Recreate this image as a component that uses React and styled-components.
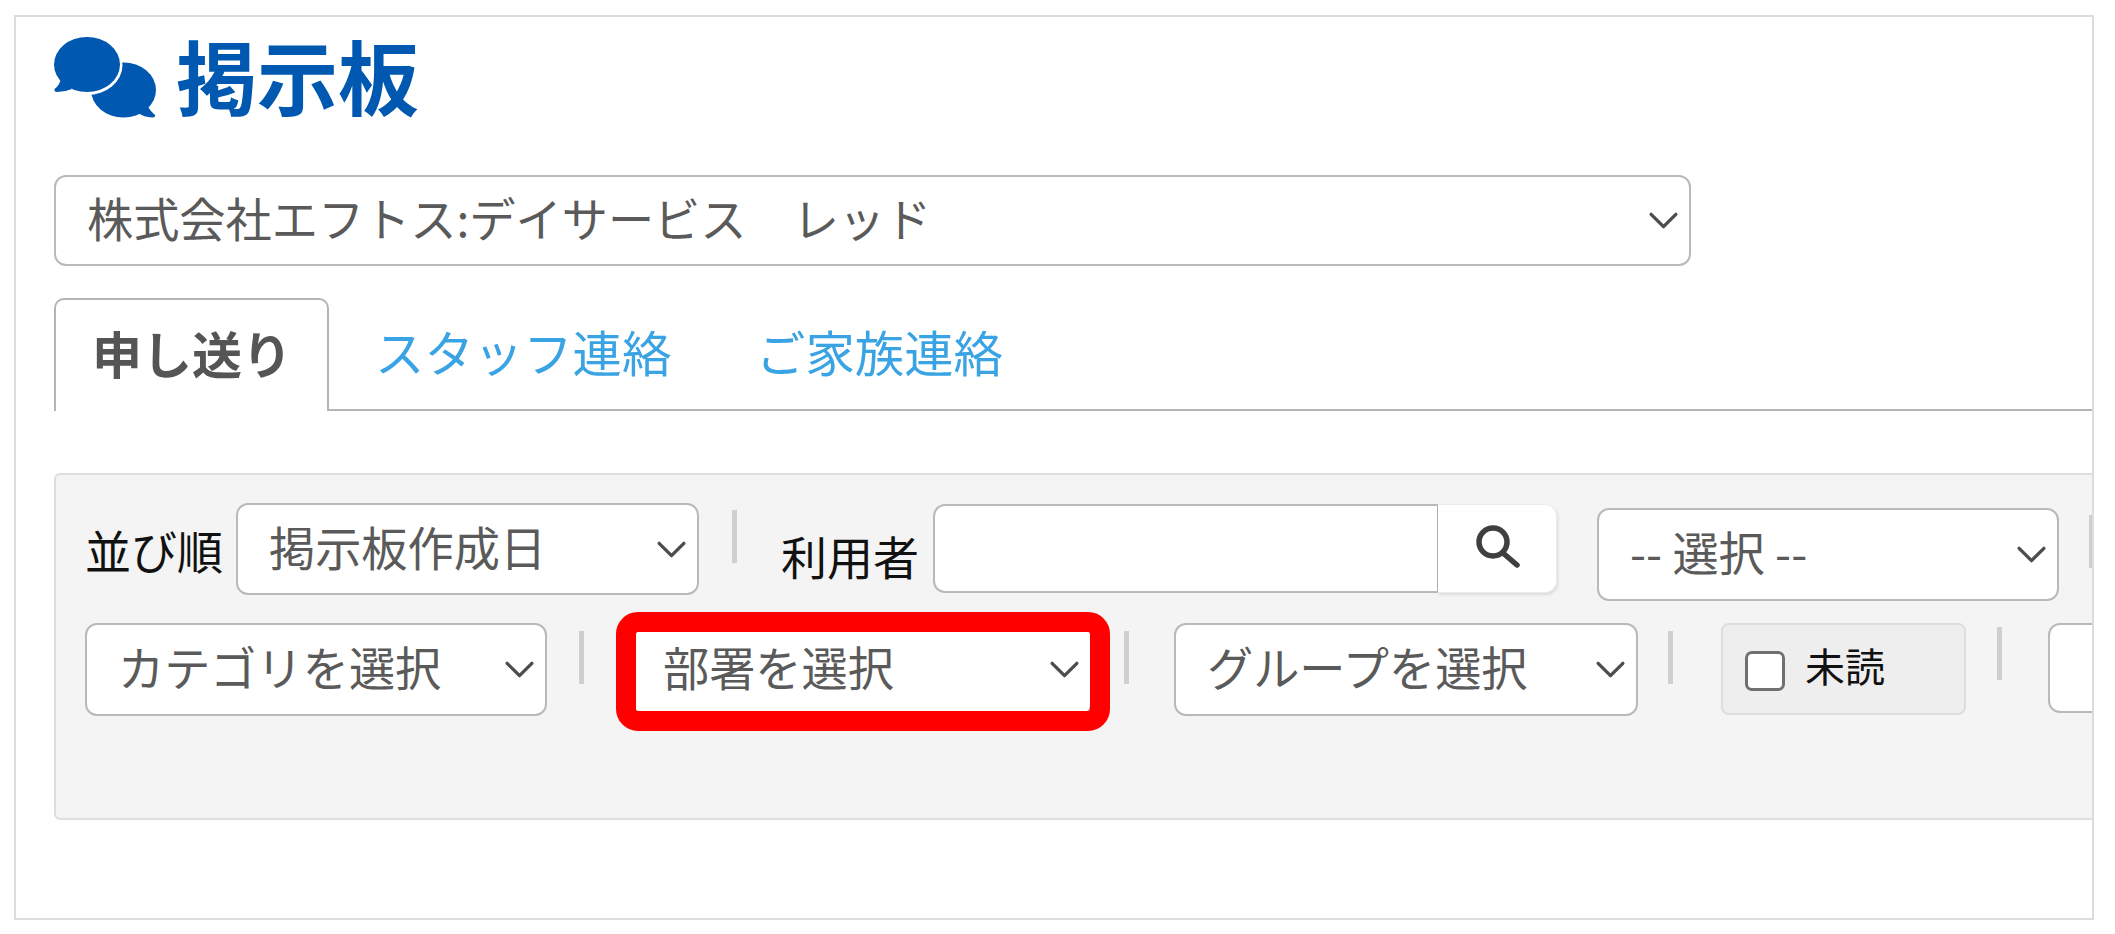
import React from 'react';
import styled, { createGlobalStyle } from 'styled-components';

const GlobalStyle = createGlobalStyle`
  html, body {
    margin: 0;
    padding: 0;
    background: #ffffff;
    font-family: "Noto Sans CJK JP", "Noto Sans", sans-serif;
  }
`;

const Frame = styled.div`
  box-sizing: border-box;
  width: 2080px;
  height: 905px;
  margin: 15px 0 0 14px;
  padding: 20px 0 0 38px;
  border: 2px solid #dcdcdc;
  overflow: hidden;
`;

const TitleRow = styled.div`
  display: flex;
  align-items: center;
  gap: 19px;
  height: 82px;
`;

const Title = styled.h1`
  margin: -8px 0 0;
  font-size: 81px;
  line-height: 82px;
  font-weight: 700;
  color: #0058b0;
`;

const SelectBox = styled.div`
  box-sizing: border-box;
  flex: none;
  display: flex;
  align-items: center;
  justify-content: space-between;
  position: relative;
  width: ${(p) => p.$width}px;
  height: ${(p) => p.$height}px;
  margin-top: ${(p) => p.$top || 0}px;
  margin-left: ${(p) => p.$left || 0}px;
  padding: 0 9px 7px ${(p) => p.$pad || 31}px;
  background: #ffffff;
  border: 2px solid #b9b9b9;
  border-radius: 12px;
  font-size: 46.2px;
  line-height: 60px;
  color: #5a5a5a;
  white-space: nowrap;
`;

const Chevron = styled.svg`
  flex: none;
  width: 33px;
  height: 33px;
  margin-top: 7px;
  fill: none;
  stroke: #4d4d4d;
  stroke-width: 1.6;
  stroke-linecap: round;
  stroke-linejoin: round;
`;

const Tabs = styled.div`
  display: flex;
  align-items: stretch;
  height: 113px;
  margin-top: 32px;
  border-bottom: 2px solid #b4b4b4;
  box-sizing: border-box;
`;

const Tab = styled.div`
  box-sizing: border-box;
  display: flex;
  align-items: center;
  height: ${(p) => (p.$active ? '113px' : '111px')};
  width: ${(p) => p.$width}px;
  padding-left: ${(p) => p.$pad}px;
  padding-bottom: 7px;
  font-size: ${(p) => (p.$active ? 50 : 49.4)}px;
  font-weight: ${(p) => (p.$active ? 700 : 400)};
  color: ${(p) => (p.$active ? '#555555' : '#3aa3e3')};
  background: #ffffff;
  border: ${(p) => (p.$active ? '2px solid #b4b4b4' : 'none')};
  border-bottom: none;
  border-radius: 10px 10px 0 0;
`;

const Panel = styled.div`
  box-sizing: border-box;
  width: 2200px;
  height: 347px;
  margin-top: 62px;
  padding: 28px 0 0 29px;
  background: #f4f4f4;
  border: 2px solid #dedede;
  border-radius: 6px;
`;

const FilterRow = styled.div`
  display: flex;
  align-items: flex-start;
  height: ${(p) => p.$height}px;
`;

const Label = styled.span`
  flex: none;
  margin-top: ${(p) => p.$top}px;
  margin-left: ${(p) => p.$left}px;
  font-size: 46px;
  line-height: 46px;
  color: #111111;
  white-space: nowrap;
`;

const Divider = styled.div`
  flex: none;
  width: 5px;
  height: 53px;
  margin-top: ${(p) => p.$top}px;
  margin-left: ${(p) => p.$left}px;
  background: #cfcfcf;
`;

const SearchGroup = styled.div`
  flex: none;
  display: flex;
  width: 624px;
  height: 89px;
  margin-top: 1px;
  margin-left: 14px;
`;

const SearchInput = styled.input`
  box-sizing: border-box;
  width: 505px;
  height: 100%;
  padding: 0 20px;
  background: #ffffff;
  border: 2px solid #b9b9b9;
  border-right: 1px solid #b0b0b0;
  border-radius: 12px 0 0 12px;
  outline: none;
`;

const SearchButton = styled.button`
  box-sizing: border-box;
  display: flex;
  align-items: center;
  justify-content: center;
  width: 119px;
  height: 100%;
  padding: 0;
  background: #ffffff;
  border: 1px solid #ebebeb;
  border-left: none;
  border-radius: 0 12px 12px 0;
  box-shadow: 1px 2px 3px rgba(0, 0, 0, 0.1);
`;

const SearchIcon = styled.svg`
  width: 46px;
  height: 44px;
  margin-bottom: 6px;
  fill: none;
  stroke: #3f3f3f;
  stroke-width: 5.5;
  stroke-linecap: round;
`;

const Highlight = styled.div`
  box-sizing: border-box;
  position: absolute;
  top: -13px;
  right: -20px;
  bottom: -17px;
  left: -16px;
  border: 20px solid #ff0000;
  border-radius: 22px;
`;

const CheckPill = styled.label`
  box-sizing: border-box;
  flex: none;
  display: flex;
  align-items: center;
  width: 245px;
  height: 92px;
  margin-left: 48px;
  padding: 0 0 0 22px;
  background: #eeeeee;
  border: 2px solid #dddddd;
  border-radius: 8px;
`;

const CheckSquare = styled.span`
  box-sizing: border-box;
  display: block;
  width: 40px;
  height: 40px;
  margin-top: 3px;
  background: #ffffff;
  border: 3px solid #707070;
  border-radius: 7px;
`;

const CheckText = styled.span`
  margin-left: 20px;
  margin-bottom: 8px;
  font-size: 40px;
  line-height: 46px;
  color: #111111;
`;

const BlankBox = styled.div`
  box-sizing: border-box;
  flex: none;
  width: 200px;
  height: 90px;
  margin-left: 46px;
  background: #ffffff;
  border: 2px solid #b9b9b9;
  border-radius: 12px;
`;

const ChevronIcon = () => (
  <Chevron viewBox="0 0 16 16">
    <path d="M2 5l6 6 6-6" />
  </Chevron>
);

const Select = ({ children, highlight, ...rest }) => (
  <SelectBox {...rest}>
    <span>{children}</span>
    <ChevronIcon />
    {highlight && <Highlight />}
  </SelectBox>
);

const BubblesIcon = () => (
  <svg width="103" height="82" viewBox="0 0 103 82">
    <ellipse cx="69.5" cy="53" rx="32.5" ry="27.5" fill="#0058b0" />
    <path d="M93 67 Q95 73 101 78 Q102 80 98 80.5 Q90 80 84 76 Z" fill="#0058b0" />
    <ellipse cx="33" cy="28" rx="35.5" ry="30" fill="#ffffff" />
    <ellipse cx="33" cy="27.5" rx="33" ry="27.5" fill="#0058b0" />
    <path d="M7 41 Q6 48 0.5 52 Q0 55 3 55 Q11 55 18 52 Z" fill="#0058b0" />
  </svg>
);

const App = () => (
  <>
    <GlobalStyle />
    <Frame>
      <TitleRow>
        <BubblesIcon />
        <Title>掲示板</Title>
      </TitleRow>
      <Select $width={1637} $height={91} $top={56}>
        株式会社エフトス:デイサービス　レッド
      </Select>
      <Tabs>
        <Tab $active $width={275} $pad={36}>申し送り</Tab>
        <Tab $width={380} $pad={46}>スタッフ連絡</Tab>
        <Tab $width={300} $pad={47}>ご家族連絡</Tab>
      </Tabs>
      <Panel>
        <FilterRow $height={120}>
          <Label $top={23} $left={0}>並び順</Label>
          <Select $width={463} $height={92} $left={13} $pad={31}>掲示板作成日</Select>
          <Divider $top={7} $left={33} />
          <Label $top={29} $left={44}>利用者</Label>
          <SearchGroup>
            <SearchInput />
            <SearchButton>
              <SearchIcon viewBox="0 0 46 44">
                <circle cx="19" cy="18" r="14" />
                <path d="M29 29 L43 41" />
              </SearchIcon>
            </SearchButton>
          </SearchGroup>
          <Select $width={462} $height={93} $top={5} $left={40} $pad={31}>-- 選択 --</Select>
          <Divider $top={12} $left={30} />
        </FilterRow>
        <FilterRow $height={100}>
          <Select $width={462} $height={93}>カテゴリを選択</Select>
          <Divider $top={8} $left={32} />
          <Select $width={462} $height={93} $left={46} highlight>部署を選択</Select>
          <Divider $top={8} $left={32} />
          <Select $width={464} $height={93} $left={45}>グループを選択</Select>
          <Divider $top={8} $left={30} />
          <CheckPill>
            <CheckSquare />
            <CheckText>未読</CheckText>
          </CheckPill>
          <Divider $top={4} $left={31} />
          <BlankBox />
        </FilterRow>
      </Panel>
    </Frame>
  </>
);

export default App;
